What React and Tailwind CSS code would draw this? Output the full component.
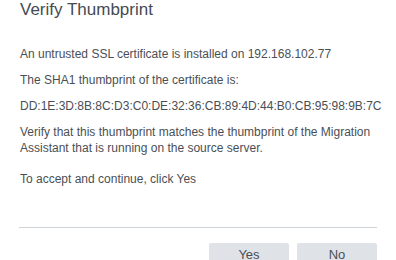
import React from 'react';

// Verify Thumbprint dialog
const App = () => {
  const paragraphs = [
    'An untrusted SSL certificate is installed on 192.168.102.77',
    'The SHA1 thumbprint of the certificate is:',
    'DD:1E:3D:8B:8C:D3:C0:DE:32:36:CB:89:4D:44:B0:CB:95:98:9B:7C',
    'Verify that this thumbprint matches the thumbprint of the Migration Assistant that is running on the source server.',
  ];

  return (
    <div className="w-[396px] h-[260px] overflow-hidden bg-white font-['Liberation_Sans',Arial,sans-serif]">
      <div className="pl-[20px] pr-[19px]">
        <h1 className="text-[17px] leading-[20px] text-[#444b52]">Verify Thumbprint</h1>

        <div className="mt-[26px] flex flex-col gap-[10px] text-[12px] leading-[16px] text-[#4a4f55]">
          {paragraphs.map((p, i) => (
            <p key={i}>{p}</p>
          ))}
          <p className="mt-[5px]">To accept and continue, click Yes</p>
        </div>

        <div className="mt-[40px] ml-[-1px] border-t border-[#cfd4d9]" />

        <div className="mt-[15px] flex justify-end gap-[8px]">
          <button className="w-[80px] h-[19px] rounded-t-[2px] bg-[#dfe3e8] pt-[3px] text-[13px] leading-[15px] text-[#4a4f55]">Yes</button>
          <button className="w-[80px] h-[19px] rounded-t-[2px] bg-[#dfe3e8] pt-[3px] text-[13px] leading-[15px] text-[#4a4f55]">No</button>
        </div>
      </div>
    </div>
  );
};

export default App;
